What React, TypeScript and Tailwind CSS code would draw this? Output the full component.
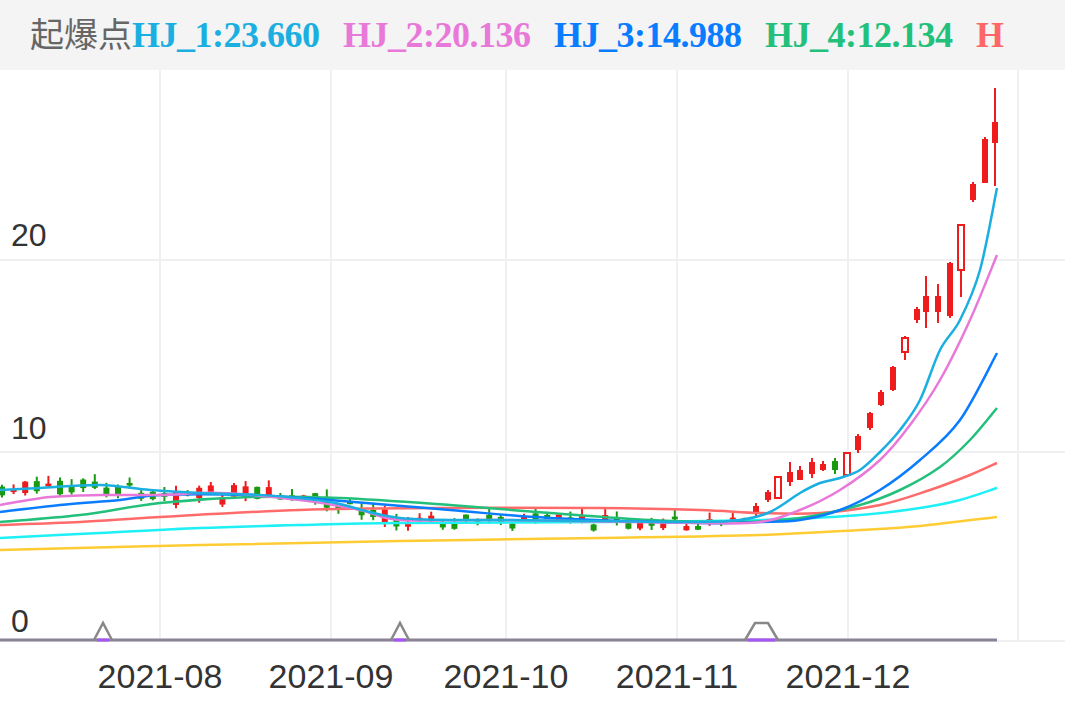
import React from "react";

type P = [number, number];
const T = 70;
const pts = (a: P[]) => a.map(([x, y]) => `${x},${y - T}`).join(" ");
const smooth = (a: P[]) => {
  const p = a.map(([x, y]) => [x, y - T]);
  let d = `M${p[0][0]},${p[0][1]}`;
  for (let i = 0; i < p.length - 1; i++) {
    const p0 = p[i - 1] || p[i], p1 = p[i], p2 = p[i + 1], p3 = p[i + 2] || p2;
    const c1 = [p1[0] + (p2[0] - p0[0]) / 6, p1[1] + (p2[1] - p0[1]) / 6];
    const c2 = [p2[0] - (p3[0] - p1[0]) / 6, p2[1] - (p3[1] - p1[1]) / 6];
    d += ` C${c1[0]},${c1[1]} ${c2[0]},${c2[1]} ${p2[0]},${p2[1]}`;
  }
  return d;
};

const lines: [string, P[]][] = [
  ["#ffcc33", [[0,550],[200,545],[400,541],[600,538],[760,535],[860,530],[920,526],[997,517]]],
  ["#1ef0f5", [[0,538],[100,533],[200,528],[300,525],[400,523],[600,522],[760,520],[860,515],[920,508],[960,500],[997,488]]],
  ["#ff6b6b", [[0,525],[80,522],[160,517],[300,510],[450,508],[600,508],[700,510],[760,513],[820,513],[880,505],[930,490],[970,475],[997,463]]],
  ["#22c07a", [[0,522],[80,515],[160,503],[250,497],[340,498],[450,505],[550,513],[650,520],[740,522],[800,518],[860,505],[900,490],[940,467],[970,440],[997,408]]],
  ["#0a7cff", [[0,512],[60,505],[120,500],[160,495],[250,495],[330,500],[450,510],[550,518],[700,523],[760,522],[800,520],[840,510],[880,490],[920,460],[960,420],[997,353]]],
  ["#e879d9", [[0,505],[50,497],[100,495],[160,495],[220,493],[300,500],[360,510],[400,520],[500,520],[700,523],[760,522],[800,510],[840,490],[880,460],[910,425],[940,380],[970,320],[997,255]]],
  ["#1aafe0", [[0,490],[40,488],[100,485],[150,490],[200,493],[260,495],[330,502],[400,518],[500,520],[600,521],[700,522],[740,520],[770,512],[800,493],[820,483],[840,478],[860,470],[880,452],[900,430],[920,400],[940,350],[960,320],[980,270],[997,188]]],
];

const right: [number, number, number, number, number, boolean?, boolean?][] = [
  [756,503,516,506,514],[768,490,502,492,500],[778,476,499,477,498,true],[790,462,486,472,482],
  [800,466,480,470,480],[812,458,478,462,474],[823,461,471,464,470],[835,458,474,461,470,false,true],
  [847,452,476,453,475,true],[858,434,453,436,450],[870,412,430,413,428],[881,390,406,392,405],
  [893,366,391,367,390],[905,336,360,338,352,true],[917,307,323,309,320],[926,276,328,296,312],
  [938,284,323,296,312],[950,262,318,263,316],[961,224,297,225,270,true],[973,182,202,184,200],
  [985,137,183,139,183],[995,88,186,122,143],
];

let seed = 7;
const rnd = () => { seed = (seed * 9301 + 49297) % 233280; return seed / 233280; };
const base = (x: number) => {
  const a = lines[6][1];
  for (let i = 0; i < a.length - 1; i++) if (x >= a[i][0] && x <= a[i + 1][0]) {
    const t = (x - a[i][0]) / (a[i + 1][0] - a[i][0]);
    return a[i][1] + t * (a[i + 1][1] - a[i][1]);
  }
  return 500;
};
const left: [number, number, number, number, number, boolean?, boolean?][] = [];
for (let x = 2; x < 745; x += 11.6) {
  const b = base(x) + (rnd() - 0.4) * 12;
  const h = 2 + rnd() * (x < 400 ? 12 : 5);
  const green = rnd() < 0.5;
  left.push([x, b - h / 2 - rnd() * 8, b + h / 2 + rnd() * 5, b - h / 2, b + h / 2, false, green]);
}

export default function App() {
  const vx = [160, 331, 506, 677, 848, 1018];
  const legend: [string, string][] = [
    ["#1aafe0", "HJ_1:23.660"], ["#e879d9", "HJ_2:20.136"], ["#0a7cff", "HJ_3:14.988"], ["#22c07a", "HJ_4:12.134"], ["#ff6666", "H"],
  ];
  return (
    <div className="w-[1065px] h-[708px] bg-white overflow-hidden" style={{ fontFamily: "'Liberation Sans', 'Noto Sans CJK SC', sans-serif" }}>
      <div className="h-[70px] bg-[#f4f4f4] flex items-center whitespace-nowrap">
        <span className="ml-[30px] w-[148px] text-[#666] text-[34px]">起爆点</span>
        <div className="flex font-bold text-[36px] tracking-[-0.5px]" style={{ fontFamily: "'Liberation Serif', serif" }}>
          {legend.map(([c, t]) => (
            <span key={t} className="w-[211px] shrink-0" style={{ color: c }}>{t}</span>
          ))}
        </div>
      </div>
      <svg width="1065" height="638" className="block">
        {vx.map((x) => <line key={x} x1={x} x2={x} y1={0} y2={571} stroke="#f0f0f2" strokeWidth={2} />)}
        {[260, 452, 641].map((y) => <line key={y} x1={0} x2={1065} y1={y - T} y2={y - T} stroke="#f0f0f2" strokeWidth={2} />)}
        <g fill="#333" fontSize="32" fontFamily="'Liberation Sans', sans-serif">
          <text x={11} y={246 - T}>20</text>
          <text x={11} y={439 - T}>10</text>
          <text x={11} y={632 - T}>0</text>
        </g>
        {[...left, ...right].map(([x, wt, wb, bt, bb, hollow, green], i) => {
          const c = green ? "#1a9a10" : "#ee1c1c";
          return (
            <g key={i}>
              <line x1={x} x2={x} y1={wt - T} y2={wb - T} stroke={c} strokeWidth={2} />
              <rect x={x - 3} y={bt - T} width={6} height={Math.max(2, bb - bt)} fill={hollow ? "#fff" : c} stroke={c} strokeWidth={hollow ? 2 : 0} />
            </g>
          );
        })}
        {lines.map(([c, a]) => <path key={c} d={smooth(a)} fill="none" stroke={c} strokeWidth={2.5} />)}
        <line x1={0} x2={997} y1={640 - T} y2={640 - T} stroke="#8a8296" strokeWidth={3} />
        {[[94, 112, 103, 103], [391, 409, 400, 400], [745, 778, 755, 768]].map(([a, b, c, d], i) => (
          <g key={i}>
            <polyline points={pts([[a, 640], [c, 623], [d, 623], [b, 640]])} fill="none" stroke="#888" strokeWidth={2.5} />
            <line x1={a + 3} x2={b - 3} y1={640 - T} y2={640 - T} stroke="#a855f7" strokeWidth={3} />
          </g>
        ))}
        <g fill="#333" fontSize="34" fontFamily="'Liberation Sans', sans-serif" textAnchor="middle">
          {["2021-08", "2021-09", "2021-10", "2021-11", "2021-12"].map((t, i) => (
            <text key={t} x={vx[i]} y={688 - T}>{t}</text>
          ))}
        </g>
      </svg>
    </div>
  );
}
